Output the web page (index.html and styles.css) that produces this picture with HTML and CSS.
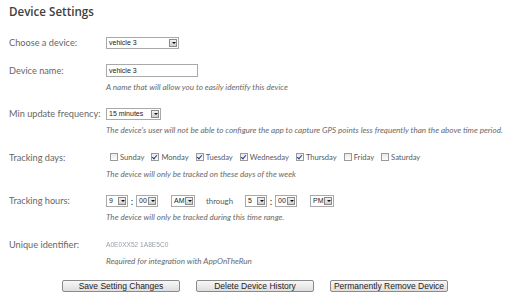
FILE: index.html
```html
<!DOCTYPE html>
<html lang="en">
<head>
  <meta charset="UTF-8">
  <title>Device Settings</title>
  <link rel="stylesheet" href="styles.css">
</head>
<body>
  <h1 class="title">Device Settings</h1>

  <div class="row first">
    <div class="label">Choose a device:</div>
    <div class="field">
      <div class="control">
        <span class="select device-select">vehicle 3<span class="arrow"></span></span>
      </div>
    </div>
  </div>

  <div class="row">
    <div class="label">Device name:</div>
    <div class="field">
      <div class="control">
        <span class="textbox">vehicle 3</span>
      </div>
      <div class="hint">A name that will allow you to easily identify this device</div>
    </div>
  </div>

  <div class="row">
    <div class="label">Min update frequency:</div>
    <div class="field">
      <div class="control">
        <span class="select freq-select">15 minutes<span class="arrow"></span></span>
      </div>
      <div class="hint">The device's user will not be able to configure the app to capture GPS points less frequently than the above time period.</div>
    </div>
  </div>

  <div class="row">
    <div class="label">Tracking days:</div>
    <div class="field">
      <div class="control days">
        <span class="day"><span class="check"></span>Sunday</span>
        <span class="day"><span class="check on"></span>Monday</span>
        <span class="day"><span class="check on"></span>Tuesday</span>
        <span class="day"><span class="check on"></span>Wednesday</span>
        <span class="day"><span class="check on"></span>Thursday</span>
        <span class="day"><span class="check"></span>Friday</span>
        <span class="day"><span class="check"></span>Saturday</span>
      </div>
      <div class="hint">The device will only be tracked on these days of the week</div>
    </div>
  </div>

  <div class="row">
    <div class="label">Tracking hours:</div>
    <div class="field">
      <div class="control hours">
        <span class="select small">9<span class="arrow"></span></span>
        <span class="colon">:</span>
        <span class="select small">00<span class="arrow"></span></span>
        <span class="select small ampm">AM<span class="arrow"></span></span>
        <span class="through">through</span>
        <span class="select small">5<span class="arrow"></span></span>
        <span class="colon">:</span>
        <span class="select small">00<span class="arrow"></span></span>
        <span class="select small ampm">PM<span class="arrow"></span></span>
      </div>
      <div class="hint">The device will only be tracked during this time range.</div>
    </div>
  </div>

  <div class="row">
    <div class="label">Unique identifier:</div>
    <div class="field">
      <div class="control">
        <span class="uid">A0E0XX52 1A8E5C0</span>
      </div>
      <div class="hint">Required for integration with AppOnTheRun</div>
    </div>
  </div>

  <div class="buttons">
    <button class="btn">Save Setting Changes</button>
    <button class="btn">Delete Device History</button>
    <button class="btn">Permanently Remove Device</button>
  </div>
</body>
</html>
```

FILE: styles.css
```css
body {
  margin: 0;
  padding: 3px 9px 0 9px;
  background-color: #ffffff;
  font-family: Lato, "Open Sans", sans-serif;
  color: #5a5a5a;
}

.title {
  margin: 0;
  font-family: "Open Sans", sans-serif;
  font-size: 11.6px;
  line-height: 17px;
  font-weight: 600;
  color: #404040;
}

.row {
  display: flex;
  margin-top: 14.5px;
}

.row.first {
  margin-top: 16px;
}

.label {
  width: 97px;
  flex-shrink: 0;
  font-size: 9.2px;
  line-height: 13px;
  white-space: nowrap;
  color: #666;
}

.field {
  flex: 1;
}

.control {
  display: flex;
  align-items: center;
  height: 13px;
}

.hint {
  margin-top: 4px;
  font-size: 8.1px;
  line-height: 12px;
  font-style: italic;
  color: #6a6a6a;
  white-space: nowrap;
}

.select, .textbox {
  position: relative;
  box-sizing: border-box;
  height: 12px;
  padding: 0 0 0 2px;
  border: 1px solid #a9a9a9;
  background-color: #fff;
  font-family: "Liberation Sans", Arial, sans-serif;
  font-size: 7px;
  line-height: 10px;
  color: #222;
  white-space: nowrap;
}

.device-select {
  width: 73px;
}

.textbox {
  width: 92px;
  height: 13px;
  line-height: 11px;
}

.freq-select {
  width: 55px;
}

.arrow {
  position: absolute;
  right: 1px;
  top: 1px;
  width: 8px;
  height: 8px;
  box-sizing: border-box;
  border: 1px solid #8a8a8a;
  background: linear-gradient(#f2f2f2, #cfcfcf);
}

.arrow::after {
  content: "";
  position: absolute;
  left: 1.5px;
  top: 2.5px;
  border-left: 2px solid transparent;
  border-right: 2px solid transparent;
  border-top: 2px solid #111;
}

.days {
  padding-left: 4px;
  font-size: 7.6px;
  color: #5a5a5a;
}

.day {
  display: flex;
  align-items: center;
  margin-right: 7px;
}

.check {
  position: relative;
  width: 8px;
  height: 8px;
  box-sizing: border-box;
  border: 1px solid #9a9a9a;
  background: linear-gradient(#e9e9e9, #fdfdfd);
  margin-right: 2px;
}

.check.on::after {
  content: "";
  position: absolute;
  left: 1px;
  top: 0;
  width: 2px;
  height: 4px;
  border-right: 1.5px solid #223a7a;
  border-bottom: 1.5px solid #223a7a;
  transform: rotate(40deg);
}

.select.small {
  width: 22px;
}

.select.ampm {
  width: 24px;
  margin-left: 13px;
}

.colon {
  width: 8px;
  text-align: center;
  font-size: 10px;
  line-height: 10px;
  color: #333;
}

.through {
  margin: 0 12px 0 11px;
  font-size: 7.8px;
  color: #5a5a5a;
}

.uid {
  font-family: "Liberation Sans", Arial, sans-serif;
  font-size: 6.6px;
  color: #9aa0a8;
  filter: blur(0.7px);
}

.buttons {
  display: flex;
  gap: 16px;
  margin: 13px 0 0 53px;
}

.btn {
  width: 118px;
  height: 12px;
  padding: 0;
  border: 1px solid #8a8a8a;
  border-radius: 2px;
  background: linear-gradient(#f7f7f7, #dedede);
  font-family: "Liberation Sans", Arial, sans-serif;
  font-size: 8.5px;
  line-height: 10px;
  color: #222;
}
```
